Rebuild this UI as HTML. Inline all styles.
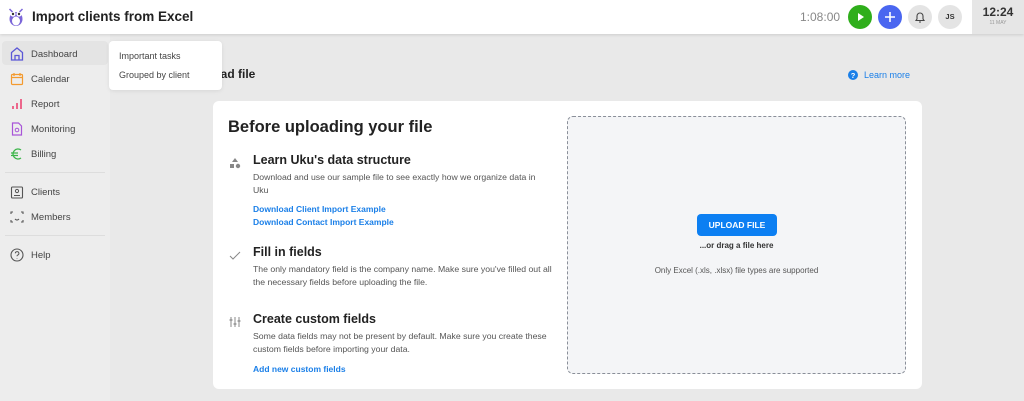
<!DOCTYPE html>
<html><head><meta charset="utf-8"><style>
*{box-sizing:border-box;margin:0;padding:0}
body{width:1024px;height:401px;overflow:hidden;background:#e9e9e9;font-family:"Liberation Sans",sans-serif;position:relative;color:#222}
.top{position:absolute;left:0;top:0;width:1024px;height:34px;background:#fff;box-shadow:0 1px 3px rgba(0,0,0,.12);z-index:2}
.title{position:absolute;left:32px;top:9px;font-size:13.5px;font-weight:bold;color:#222}
.clock{position:absolute;right:0;top:0;width:52px;height:34px;background:#e6e6e6;text-align:center}
.side{position:absolute;left:0;top:34px;width:110px;height:367px;background:#ededed}
.nav{position:absolute;left:0;width:110px;height:24px;font-size:9.5px;color:#444}
.nav span{position:absolute;left:31px;top:8px}
.nav svg{position:absolute;left:9px;top:5px}
.hr{position:absolute;left:5px;width:100px;height:1px;background:#ddd}
.dd{position:absolute;left:109px;top:41px;width:113px;height:49px;background:#fff;border-radius:4px;box-shadow:0 1px 4px rgba(0,0,0,.08);font-size:9px;color:#444;z-index:3}
.card{position:absolute;left:213px;top:101px;width:709px;height:288px;background:#fff;border-radius:6px}
.drop{position:absolute;left:354px;top:15px;width:339px;height:258px;background:#f4f5f7;border:1.3px dashed #8a8f99;border-radius:6px;text-align:center}
.h{position:absolute;font-size:12.5px;font-weight:bold;color:#222}
.p{position:absolute;font-size:8.7px;color:#555;line-height:12.5px;width:300px}
.a{position:absolute;font-size:8.5px;color:#1a7fe8;font-weight:bold;line-height:12.5px}
.circ{position:absolute;top:5px;width:24px;height:24px;border-radius:50%}
</style></head><body>
<div class="top">
<svg style="position:absolute;left:8px;top:7px" width="16" height="20" viewBox="0 0 16 20"><ellipse cx="8" cy="12" rx="6.5" ry="7" fill="#7b66d9"/><ellipse cx="8" cy="14" rx="4" ry="4.5" fill="#fff"/><circle cx="5" cy="7" r="2.6" fill="#fff"/><circle cx="11" cy="7" r="2.6" fill="#fff"/><circle cx="5" cy="7" r="1.2" fill="#333"/><circle cx="11" cy="7" r="1.2" fill="#333"/><path d="M1.5 2l3 3M14.5 2l-3 3" stroke="#7b66d9" stroke-width="1.5"/></svg>
<div class="title">Import clients from Excel</div>
<div style="position:absolute;left:800px;top:10px;font-size:12px;color:#888">1:08:00</div>
<div class="circ" style="left:848px;background:#2fae1b"><svg width="24" height="24"><path d="M10 8l6 4-6 4z" fill="#fff"/></svg></div>
<div class="circ" style="left:878px;background:#4a66f0"><svg width="24" height="24"><path d="M12 7v10M7 12h10" stroke="#fff" stroke-width="1.6"/></svg></div>
<div class="circ" style="left:908px;background:#e4e4e4"><svg width="24" height="24"><path d="M8 15.5h8l-1-1.5v-3a3 3 0 0 0-6 0v3zM11 17h2" fill="none" stroke="#444" stroke-width="1.1"/></svg></div>
<div class="circ" style="left:938px;background:#e4e4e4;font-size:7.5px;font-weight:bold;color:#333;text-align:center;line-height:24px">JS</div>
<div class="clock"><div style="font-size:12px;font-weight:bold;color:#333;margin-top:5px">12:24</div><div style="font-size:5px;color:#999;margin-top:1px">11 MAY</div></div>
</div>
<div class="side">
<div style="position:absolute;left:2px;top:7px;width:106px;height:24px;background:#e4e4e4;border-radius:4px"></div>
<div class="nav" style="top:7px"><svg width="16" height="16"><path d="M2.5 14V6.5L8 2l5.5 4.5V14zM6 14V9.5h4V14" fill="none" stroke="#5b57d6" stroke-width="1.3"/></svg><span>Dashboard</span></div>
<div class="nav" style="top:32px"><svg width="16" height="16"><rect x="2.5" y="3.5" width="11" height="10" rx="1" fill="none" stroke="#f39a2e" stroke-width="1.2"/><path d="M2.5 6.5h11M5 2v3M11 2v3" stroke="#f39a2e" stroke-width="1.2"/></svg><span>Calendar</span></div>
<div class="nav" style="top:57px"><svg width="16" height="16"><path d="M4 13v-3M8 13V7M12 13V3" stroke="#ec3b6d" stroke-width="1.5"/></svg><span>Report</span></div>
<div class="nav" style="top:82px"><svg width="16" height="16"><path d="M3.5 2h6l3 3v9h-9z" fill="none" stroke="#a855d8" stroke-width="1.2"/><circle cx="8" cy="9" r="1.8" fill="none" stroke="#a855d8"/></svg><span>Monitoring</span></div>
<div class="nav" style="top:107px"><svg width="16" height="16"><path d="M12 4a5 5 0 1 0 0 8M2 7h7M2 9.5h7" fill="none" stroke="#3cb54a" stroke-width="1.3"/></svg><span>Billing</span></div>
<div class="hr" style="top:138px"></div>
<div class="nav" style="top:145px"><svg width="16" height="16"><rect x="2.5" y="3" width="11" height="11" rx="1" fill="none" stroke="#555" stroke-width="1.1"/><circle cx="8" cy="7" r="1.6" fill="none" stroke="#555"/><path d="M5 11.5h6" stroke="#555"/></svg><span>Clients</span></div>
<div class="nav" style="top:170px"><svg width="16" height="16"><path d="M2 5V3h2M12 3h2v2M14 11v2h-2M4 13H2v-2M6 10q2 2 4 0" fill="none" stroke="#555" stroke-width="1.1"/></svg><span>Members</span></div>
<div class="hr" style="top:201px"></div>
<div class="nav" style="top:208px"><svg width="16" height="16"><circle cx="8" cy="8" r="6" fill="none" stroke="#555" stroke-width="1.1"/><path d="M6.3 6.3a1.8 1.8 0 1 1 2.3 1.8c-.6.2-.6.6-.6 1.2M8 11v.5" fill="none" stroke="#555"/></svg><span>Help</span></div>
</div>
<div style="position:absolute;left:194px;top:67px;font-size:12px;font-weight:bold;color:#222">Upload file</div>
<div class="dd"><div style="position:absolute;left:10px;top:10px">Important tasks</div><div style="position:absolute;left:10px;top:29px">Grouped by client</div></div>
<svg style="position:absolute;left:848px;top:70px" width="10" height="10"><circle cx="5" cy="5" r="5" fill="#1a7fe8"/><text x="5" y="8" font-size="7.5" fill="#fff" text-anchor="middle" font-family="Liberation Sans" font-weight="bold">?</text></svg>
<div style="position:absolute;left:864px;top:70px;font-size:9px;color:#1a7fe8">Learn more</div>
<div class="card">
<div style="position:absolute;left:15px;top:17px;font-size:16.5px;font-weight:bold;color:#222">Before uploading your file</div>
<svg style="position:absolute;left:16px;top:56px" width="12" height="12"><path d="M6 1l3 4H3z" fill="#888"/><rect x="1" y="7" width="4" height="4" fill="#888"/><circle cx="9" cy="9" r="2.2" fill="#888"/></svg>
<div class="h" style="left:40px;top:52px">Learn Uku's data structure</div>
<div class="p" style="left:40px;top:70px">Download and use our sample file to see exactly how we organize data in Uku</div>
<div class="a" style="left:40px;top:102px">Download Client Import Example<br>Download Contact Import Example</div>
<svg style="position:absolute;left:16px;top:148px" width="12" height="12"><path d="M1 7l3 3 7-7" fill="none" stroke="#888" stroke-width="1"/></svg>
<div class="h" style="left:40px;top:144px">Fill in fields</div>
<div class="p" style="left:40px;top:162px">The only mandatory field is the company name. Make sure you've filled out all the necessary fields before uploading the file.</div>
<svg style="position:absolute;left:16px;top:215px" width="12" height="12"><path d="M2 1v10M6 1v10M10 1v10" stroke="#888"/><path d="M0.5 4h3M4.5 8h3M8.5 5h3" stroke="#888" stroke-width="1.3"/></svg>
<div class="h" style="left:40px;top:211px">Create custom fields</div>
<div class="p" style="left:40px;top:229px">Some data fields may not be present by default. Make sure you create these custom fields before importing your data.</div>
<div class="a" style="left:40px;top:262px">Add new custom fields</div>
<div class="drop">
<div style="position:absolute;left:129px;top:97px;width:80px;height:22px;background:#0c7ff2;border-radius:4px;color:#fff;font-size:8.5px;font-weight:bold;line-height:22px">UPLOAD FILE</div>
<div style="position:absolute;left:0;width:100%;top:124px;font-size:8px;font-weight:bold;color:#333">...or drag a file here</div>
<div style="position:absolute;left:0;width:100%;top:149px;font-size:8px;color:#555">Only Excel (.xls, .xlsx) file types are supported</div>
</div>
</div>
</body></html>
